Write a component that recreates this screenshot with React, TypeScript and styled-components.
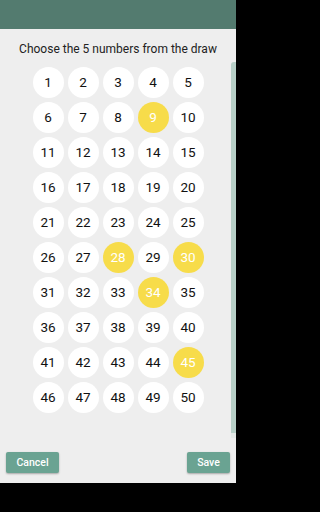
import React from "react";
import styled, { createGlobalStyle } from "styled-components";

const GlobalStyle = createGlobalStyle`
  html, body {
    margin: 0;
    padding: 0;
    background: #000;
    font-family: Roboto, "Liberation Sans", sans-serif;
  }
`;

const Screen = styled.div`
  width: 236px;
  height: 512px;
  display: flex;
  flex-direction: column;
  background: #000;
`;

const TopBar = styled.div`
  height: 29px;
  background: #537b6f;
  flex-shrink: 0;
`;

const Sheet = styled.div`
  height: 454px;
  background: #eeeeee;
  display: flex;
  flex-direction: column;
  position: relative;
`;

const Title = styled.div`
  margin-top: 12px;
  height: 16px;
  line-height: 16px;
  text-align: center;
  font-size: 12px;
  color: #222;
`;

const Grid = styled.div`
  margin: 9.5px auto 0;
  display: grid;
  grid-template-columns: repeat(5, 31px);
  grid-auto-rows: 31px;
  gap: 4px;
`;

const Ball = styled.div<{ $picked: boolean }>`
  width: 31px;
  height: 31px;
  border-radius: 50%;
  background: ${({ $picked }) => ($picked ? "#f7dc4a" : "#ffffff")};
  color: ${({ $picked }) => ($picked ? "#ffffff" : "#111")};
  display: flex;
  align-items: center;
  justify-content: center;
  font-size: 13.5px;
`;

const ScrollThumb = styled.div`
  position: absolute;
  right: 0;
  top: 33px;
  width: 5px;
  height: 371px;
  background: #b7cfc7;
  border-top-left-radius: 3px;
  &::after {
    content: "";
    position: absolute;
    left: 0;
    top: 371px;
    width: 5px;
    height: 5px;
    background: #e3e8e6;
  }
`;

const Actions = styled.div`
  margin-top: auto;
  margin-bottom: 10px;
  padding: 0 6px;
  display: flex;
  justify-content: space-between;
`;

const ActionButton = styled.button<{ $w: number }>`
  width: ${({ $w }) => $w}px;
  height: 21px;
  border: none;
  border-radius: 2px;
  background: #6aa392;
  color: #fff;
  font-family: Roboto, "Liberation Sans", sans-serif;
  font-weight: 500;
  font-size: 10.5px;
  padding: 0;
  box-shadow: 0 1px 2px rgba(0, 0, 0, 0.3);
`;

const picked = new Set([9, 28, 30, 34, 45]);

export default function App() {
  const numbers = Array.from({ length: 50 }, (_, i) => i + 1);
  return (
    <>
      <GlobalStyle />
      <Screen>
        <TopBar />
        <Sheet>
          <Title>Choose the 5 numbers from the draw</Title>
          <Grid>
            {numbers.map((n) => (
              <Ball key={n} $picked={picked.has(n)}>
                {n}
              </Ball>
            ))}
          </Grid>
          <ScrollThumb />
          <Actions>
            <ActionButton $w={53}>Cancel</ActionButton>
            <ActionButton $w={43}>Save</ActionButton>
          </Actions>
        </Sheet>
      </Screen>
    </>
  );
}
